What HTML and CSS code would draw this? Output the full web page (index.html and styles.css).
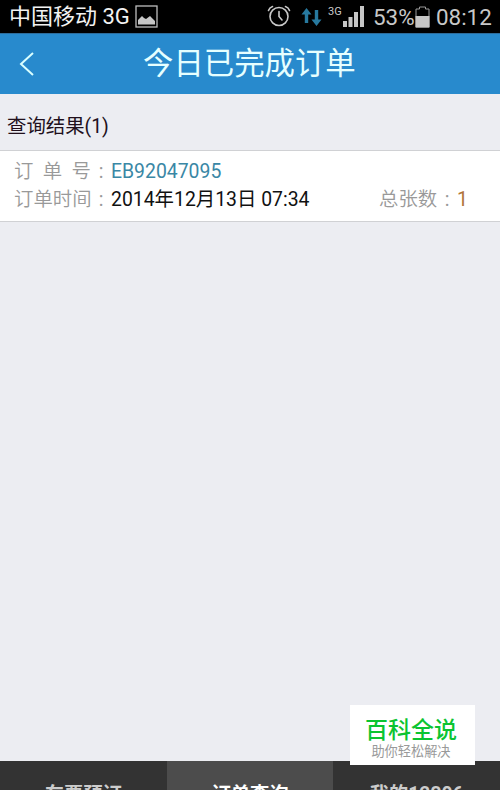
FILE: index.html
```html
<!DOCTYPE html>
<html lang="zh-CN">
<head>
  <meta charset="UTF-8" />
  <meta name="viewport" content="width=device-width, initial-scale=1.0" />
  <title>今日已完成订单</title>
  <link rel="stylesheet" href="styles.css">
</head>
<body>
<div class="status-bar">
  <span class="carrier">中国移动 3G</span>
  <svg class="icon-picture" width="24" height="24" viewBox="0 0 24 24">
    <rect x="1" y="1" width="21" height="21" fill="none" stroke="#bdbdbd" stroke-width="1.3"/>
    <path d="M3 19.500V15L7 11L9 13L11 14L15 11L20 16V19.500Z" fill="#c6c6c6"/>
  </svg>
  <div class="status-right">
    <svg class="icon-alarm" width="24" height="24" viewBox="0 0 24 24" fill="none" stroke="#c8c8c8" stroke-width="1.6" stroke-linecap="round">
      <circle cx="12" cy="12.5" r="9"/>
      <path d="M12 7.5V12.5L15 16M1.500 6.500Q2.500 3.500 5.500 2.500M22.500 6.500Q21.500 3.500 18.500 2.500"/>
    </svg>
    <svg class="icon-data" width="21" height="20" viewBox="0 0 21 20" fill="#27799f">
      <path d="M5.500 1L10.500 7.500H7.200V16H3.800V7.500H0.500Z"/>
      <path d="M15.500 19L20.500 12.500H17.200V3H13.800V12.500H10.500Z"/>
    </svg>
    <span class="network">3G</span>
    <svg class="icon-signal" width="22" height="22" viewBox="0 0 22 22" fill="#c6c6c6">
      <rect x="0" y="15" width="4" height="6"/>
      <rect x="5.500" y="11" width="4" height="10"/>
      <rect x="11" y="6" width="4" height="15"/>
      <rect x="17" y="0" width="4" height="21"/>
    </svg>
    <span class="percent">53%</span>
    <svg class="icon-battery" width="15" height="22" viewBox="0 0 15 22">
      <path d="M1 21V3H4.500V1H10.500V3H14V21Z" fill="none" stroke="#999" stroke-width="1"/>
      <rect x="0.500" y="10" width="14" height="11.500" fill="#c6c6c6"/>
    </svg>
    <span class="clock">08:12</span>
  </div>
</div>

<div class="header">
  <svg class="back" width="16" height="26" viewBox="0 0 16 26">
    <path d="M14 2L2 13L14 24" fill="none" stroke="#d9ffff" stroke-width="2"/>
  </svg>
  <h1>今日已完成订单</h1>
</div>

<div class="content">
  <p class="result">查询结果(1)</p>
  <div class="order">
    <div class="row">
      <span class="label"><span>订</span><span>单</span><span>号</span></span>
      <span class="colon">:</span>
      <span class="number">EB92047095</span>
    </div>
    <div class="row">
      <span class="label"><span>订</span><span>单</span><span>时</span><span>间</span></span>
      <span class="colon">:</span>
      <span class="time">2014年12月13日 07:34</span>
      <span class="total">总张数</span>
      <span class="colon">:</span>
      <span class="count">1</span>
    </div>
  </div>
</div>

<div class="tabs">
  <div class="tab">车票预订</div>
  <div class="tab active">订单查询</div>
  <div class="tab">我的12306</div>
</div>

<div class="badge">
  <div class="badge-title">百科全说</div>
  <div class="badge-text">助你轻松解决</div>
</div>
</body>
</html>
```

FILE: styles.css
```css
body,
html {
  margin: 0;
  padding: 0;
  height: 790px;
  overflow: hidden;
  background-color: #ecedf2;
  font-family: Roboto, "Noto Sans CJK SC", sans-serif;
}
body {
  display: flex;
  flex-direction: column;
  position: relative;
}
.status-bar {
  display: flex;
  flex: none;
  height: 33px;
  padding: 0 9px;
  background-color: #000;
  color: #c8c8c8;
  line-height: 34px;
  white-space: nowrap;
}
.carrier {
  width: 126px;
  font-size: 22px;
  color: #f2f2f2;
}
.icon-picture {
  margin-top: 5px;
}
.status-right {
  display: flex;
  margin-left: auto;
}
.icon-alarm {
  margin-top: 4px;
}
.icon-data {
  margin: 7px 0 0 10px;
}
.network {
  width: 15px;
  margin-left: 6px;
  font-size: 11px;
  line-height: 23px;
}
.icon-signal {
  margin-top: 6px;
}
.percent {
  width: 42px;
  margin-left: 8px;
  font-size: 22.4px;
  line-height: 35px;
}
.icon-battery {
  margin-top: 6px;
}
.clock {
  width: 55px;
  margin-left: 6px;
  font-size: 22.4px;
  line-height: 35px;
}
.header {
  display: flex;
  flex: none;
  align-items: center;
  box-sizing: border-box;
  height: 61px;
  padding-left: 19px;
  background-color: #288acd;
  border-top: 1px solid #2d6c9b;
}
.header h1 {
  margin: 0 0 0 108px;
  font-size: 30.4px;
  font-weight: normal;
  line-height: 60px;
  color: #e6ffff;
}
.content {
  flex: 1;
}
.result {
  margin: 0;
  padding: 13px 0 0 7px;
  height: 43px;
  font-size: 19.4px;
  line-height: 40px;
  color: #21101c;
}
.order {
  box-sizing: border-box;
  height: 72px;
  padding: 7px 14px 0;
  background-color: #fff;
  border-top: 1px solid #d0d1d4;
  border-bottom: 1px solid #d0d1d4;
}
.row {
  display: flex;
  height: 28px;
  font-size: 19.4px;
  line-height: 28px;
  white-space: nowrap;
}
.label {
  display: flex;
  justify-content: space-between;
  width: 77px;
  color: #999;
  font-weight: 350;
}
.colon {
  width: 20px;
  text-align: center;
  color: #999;
}
.number {
  color: #3a87a5;
}
.time {
  width: 268px;
  color: #111;
}
.total {
  width: 58px;
  color: #999;
  font-weight: 350;
}
.count {
  color: #b07439;
}
.tabs {
  display: flex;
  flex: none;
  height: 29px;
  overflow: hidden;
}
.tab {
  flex: 1;
  background-color: #333;
  color: #ccc;
  font-size: 19.3px;
  font-weight: bold;
  line-height: 68px;
  text-align: center;
}
.tab.active {
  background-color: #4c4c4c;
  color: #fff;
}
/* floats over the page and the tab bar */
.badge {
  position: absolute;
  right: 25px;
  bottom: 25px;
  box-sizing: border-box;
  width: 125px;
  height: 60px;
  padding-right: 3px;
  background-color: #fff;
  text-align: center;
}
.badge-title {
  padding-top: 11px;
  font-size: 23px;
  font-weight: 500;
  line-height: 29px;
  color: #0bc431;
}
.badge-text {
  font-size: 13.2px;
  line-height: 14px;
  color: #999;
}
```
